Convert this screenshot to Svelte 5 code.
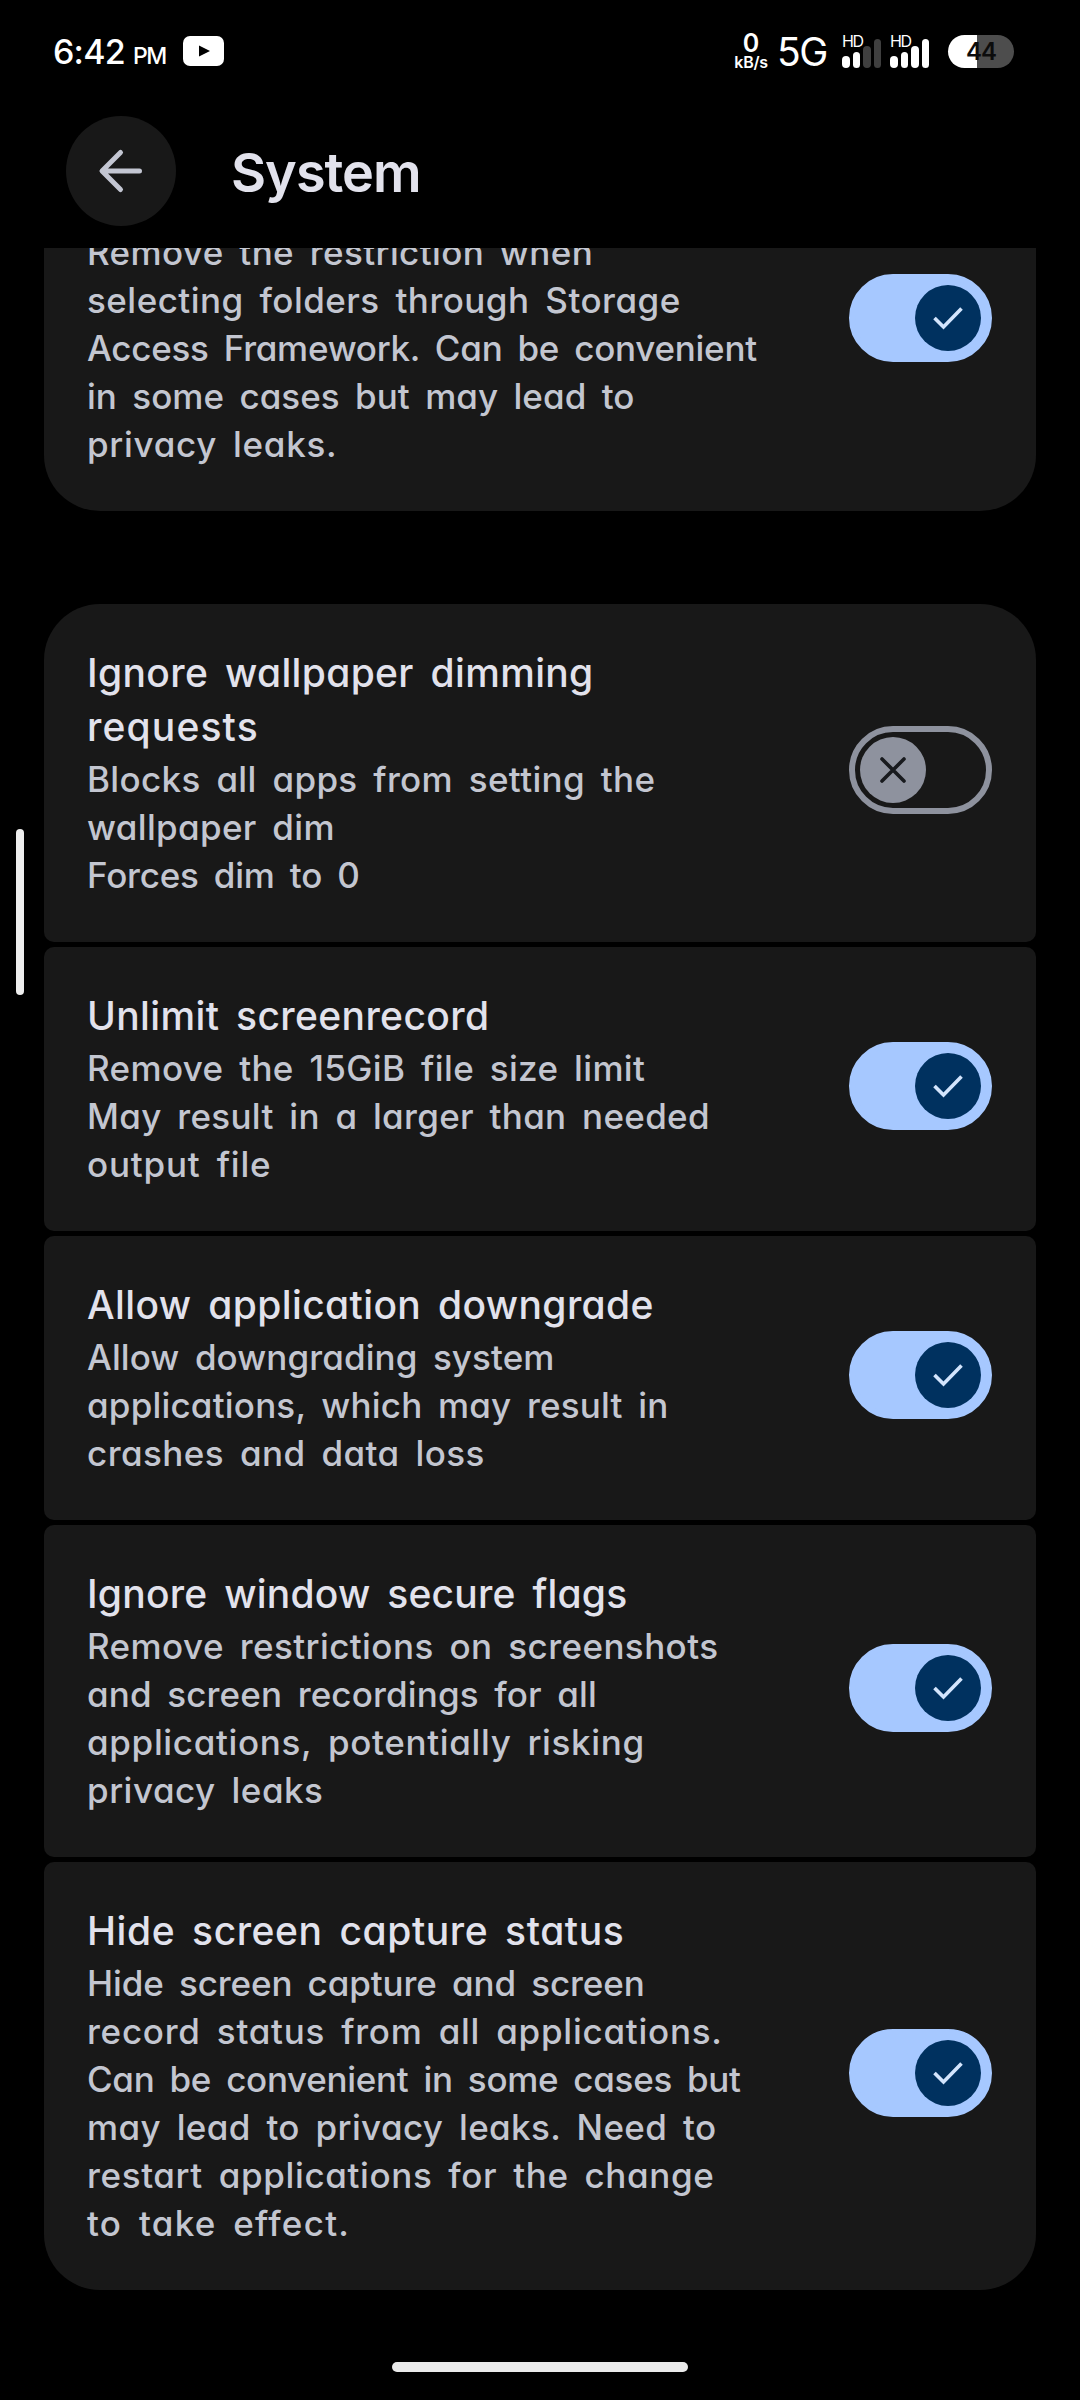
<script lang="ts">
    import { tick } from 'svelte';

    type Line = { text: string; width: number };
    type Setting = { title: Line[]; summary: Line[]; on: boolean };

    const storage: Line[] = [
        { text: 'Remove the restriction when', width: 506 },
        { text: 'selecting folders through Storage', width: 593 },
        { text: 'Access Framework. Can be convenient', width: 670 },
        { text: 'in some cases but may lead to', width: 547 },
        { text: 'privacy leaks.', width: 250 }
    ];

    const settings: Setting[] = [
        {
            title: [
                { text: 'Ignore wallpaper dimming', width: 506 },
                { text: 'requests', width: 171 }
            ],
            summary: [
                { text: 'Blocks all apps from setting the', width: 568 },
                { text: 'wallpaper dim', width: 248 },
                { text: 'Forces dim to 0', width: 273 }
            ],
            on: false
        },
        {
            title: [{ text: 'Unlimit screenrecord', width: 402 }],
            summary: [
                { text: 'Remove the 15GiB file size limit', width: 558 },
                { text: 'May result in a larger than needed', width: 623 },
                { text: 'output file', width: 184 }
            ],
            on: true
        },
        {
            title: [{ text: 'Allow application downgrade', width: 567 }],
            summary: [
                { text: 'Allow downgrading system', width: 467 },
                { text: 'applications, which may result in', width: 581 },
                { text: 'crashes and data loss', width: 397 }
            ],
            on: true
        },
        {
            title: [{ text: 'Ignore window secure flags', width: 540 }],
            summary: [
                { text: 'Remove restrictions on screenshots', width: 631 },
                { text: 'and screen recordings for all', width: 510 },
                { text: 'applications, potentially risking', width: 557 },
                { text: 'privacy leaks', width: 236 }
            ],
            on: true
        },
        {
            title: [{ text: 'Hide screen capture status', width: 537 }],
            summary: [
                { text: 'Hide screen capture and screen', width: 558 },
                { text: 'record status from all applications.', width: 635 },
                { text: 'Can be convenient in some cases but', width: 654 },
                { text: 'may lead to privacy leaks. Need to', width: 629 },
                { text: 'restart applications for the change', width: 627 },
                { text: 'to take effect.', width: 262 }
            ],
            on: true
        }
    ];

    const signals = [2, 4];

    // spread the letters of a line over its width
    function fit(node: HTMLElement, width: number) {
        tick().then(() => {
            const chars = node.textContent!.length;
            const gap = (width - node.offsetWidth) / (chars - 1);
            node.style.letterSpacing = `${gap.toFixed(3)}px`;
        });
    }
</script>

{#snippet lines(list: Line[])}
    {#each list as line}
        <div class="line"><span use:fit={line.width}>{line.text}</span></div>
    {/each}
{/snippet}

{#snippet toggle(on: boolean)}
    <div class="switch" class:on>
        <div class="thumb">
            <svg viewBox="0 0 66 66" fill="none">
                {#if on}
                    <path d="M19.5 33 L28.5 42 L46.5 23.5" stroke="#d3e5fd" stroke-width="3.6" />
                {:else}
                    <path d="M22 22 L44 44 M44 22 L22 44" stroke="#181a1e" stroke-width="3.6" stroke-linecap="round" />
                {/if}
            </svg>
        </div>
    </div>
{/snippet}

<div class="screen">
    <div class="status-bar">
        <span class="time">6:42</span>
        <span class="ampm">PM</span>
        <svg class="video" width="41" height="30" viewBox="0 0 41 30">
            <rect width="41" height="30" rx="7" fill="#fff" />
            <path d="M16 9.5 L27 15 L16 20.5 Z" fill="#000" />
        </svg>

        <div class="speed">
            <span class="rate">0</span>
            <span class="unit">kB/s</span>
        </div>
        <span class="network">5G</span>
        {#each signals as level}
            <div class="signal">
                <span class="hd">HD</span>
                <div class="bars">
                    {#each [12, 16, 22, 29] as height, i}
                        <div class="bar" class:dim={i >= level} style="height: {height}px"></div>
                    {/each}
                </div>
            </div>
        {/each}
        <div class="battery">44</div>
    </div>

    <header>
        <button class="back" aria-label="Back">
            <svg width="110" height="110" viewBox="0 0 110 110" fill="none" stroke="#c3c6d2" stroke-width="5" stroke-linecap="round" stroke-linejoin="round">
                <path d="M54.5 36.5 L36 55 L54.5 73.5 M37 55 H73.5" />
            </svg>
        </button>
        <h1><span use:fit={191}>System</span></h1>
    </header>

    <main>
        <section class="card partial">
            <div class="text">
                <div class="summary">{@render lines(storage)}</div>
            </div>
            {@render toggle(true)}
        </section>

        <div class="group">
            {#each settings as setting}
                <section class="card">
                    <div class="text">
                        <div class="title">{@render lines(setting.title)}</div>
                        <div class="summary">{@render lines(setting.summary)}</div>
                    </div>
                    {@render toggle(setting.on)}
                </section>
            {/each}
        </div>
    </main>

    <div class="edge-handle"></div>
    <div class="nav-handle"></div>
</div>

<style>
    :global(body) {
        background: #000;
    }

    .screen {
        position: relative;
        width: 1080px;
        height: 2400px;
        overflow: hidden;
        background: #000;
        color: #e2e2ec;
        font-family: Inter, 'Open Sans', sans-serif;
        font-feature-settings: 'cv11', 'calt' 0;
    }

    .status-bar {
        display: flex;
        align-items: center;
        height: 102px;
        padding: 0 66px 0 53px;
        box-sizing: border-box;
        color: #fff;
    }

    .time {
        width: 80px;
        font-size: 34px;
        font-weight: 500;
        letter-spacing: -0.8px;
    }

    .ampm {
        width: 50px;
        padding-top: 9px;
        font-size: 23px;
        font-weight: 500;
        letter-spacing: -1.5px;
    }

    .speed {
        display: flex;
        flex-direction: column;
        align-items: center;
        width: 36px;
        margin-left: auto;
        margin-right: 8px;
        padding-top: 2px;
    }

    .rate {
        font-size: 25px;
        line-height: 20px;
        font-weight: 600;
    }

    .unit {
        font-size: 16px;
        line-height: 18px;
        font-weight: 600;
        letter-spacing: -0.3px;
    }

    .network {
        width: 65px;
        font-size: 39px;
        font-weight: 400;
        letter-spacing: -1.5px;
    }

    .signal {
        display: flex;
        flex-direction: column;
        width: 39px;
        height: 33px;
        margin-right: 9px;
    }

    .signal + .battery {
        margin-left: 10px;
    }

    .hd {
        height: 12px;
        margin-top: -1px;
        font-size: 16px;
        line-height: 14px;
        letter-spacing: -1.5px;
    }

    .bars {
        display: flex;
        align-items: flex-end;
        justify-content: space-between;
        height: 22px;
    }

    .bar {
        width: 7.5px;
        border-radius: 4px;
        background: #fff;
    }

    .bar.dim {
        background: #3f3f3f;
    }

    .battery {
        width: 66px;
        height: 33px;
        border-radius: 17px;
        background: linear-gradient(90deg, #fff 44%, #4d4d4d 44%);
        color: #0c0c0c;
        font-size: 24px;
        line-height: 33px;
        font-weight: 600;
        letter-spacing: -1px;
        text-align: center;
    }

    header {
        display: flex;
        align-items: center;
        gap: 55px;
        height: 146px;
        padding: 0 66px 8px;
        box-sizing: border-box;
    }

    .back {
        width: 110px;
        height: 110px;
        padding: 0;
        border: none;
        border-radius: 50%;
        background: #181818;
    }

    h1 {
        margin: 2px 0 0;
        font-size: 54px;
        font-weight: 600;
        white-space: nowrap;
    }

    main {
        height: 2042px;
        padding: 0 44px;
        overflow: hidden;
    }

    .group {
        display: flex;
        flex-direction: column;
        gap: 5px;
    }

    .card {
        display: flex;
        align-items: center;
        justify-content: space-between;
        padding: 43px 44px;
        border-radius: 10px;
        background: #181818;
    }

    .card:first-child {
        border-top-left-radius: 56px;
        border-top-right-radius: 56px;
    }

    .card:last-child {
        border-bottom-left-radius: 56px;
        border-bottom-right-radius: 56px;
    }

    /* scrolled half way under the header */
    .card.partial {
        margin: -117px 0 93px;
        border-radius: 56px;
    }

    .partial .text {
        padding-top: 54px;
    }

    .line {
        white-space: nowrap;
    }

    .title .line {
        height: 54px;
        margin-left: -1px;
        font-size: 39px;
        line-height: 51px;
        font-weight: 500;
        word-spacing: 6px;
    }

    .summary .line {
        height: 48px;
        margin-left: -1px;
        color: #c3c6d0;
        font-size: 35px;
        line-height: 49px;
        font-weight: 450;
        word-spacing: 6px;
    }

    .switch {
        display: flex;
        align-items: center;
        width: 143px;
        height: 88px;
        margin-bottom: 6px;
        padding: 0 5px;
        box-sizing: border-box;
        border: 6px solid #8e929e;
        border-radius: 44px;
    }

    .switch.on {
        justify-content: flex-end;
        border-color: #a6c8ff;
        background: #a6c8ff;
    }

    .thumb {
        width: 66px;
        height: 66px;
        border-radius: 50%;
        background: #8e929e;
    }

    .on .thumb {
        background: #00315f;
    }

    .thumb svg {
        display: block;
    }

    .edge-handle {
        position: absolute;
        left: 16px;
        top: 829px;
        width: 8px;
        height: 166px;
        border-radius: 4px;
        background: #eee;
    }

    .nav-handle {
        position: absolute;
        left: 392px;
        top: 2362px;
        width: 296px;
        height: 10px;
        border-radius: 5px;
        background: #ebebeb;
    }
</style>
